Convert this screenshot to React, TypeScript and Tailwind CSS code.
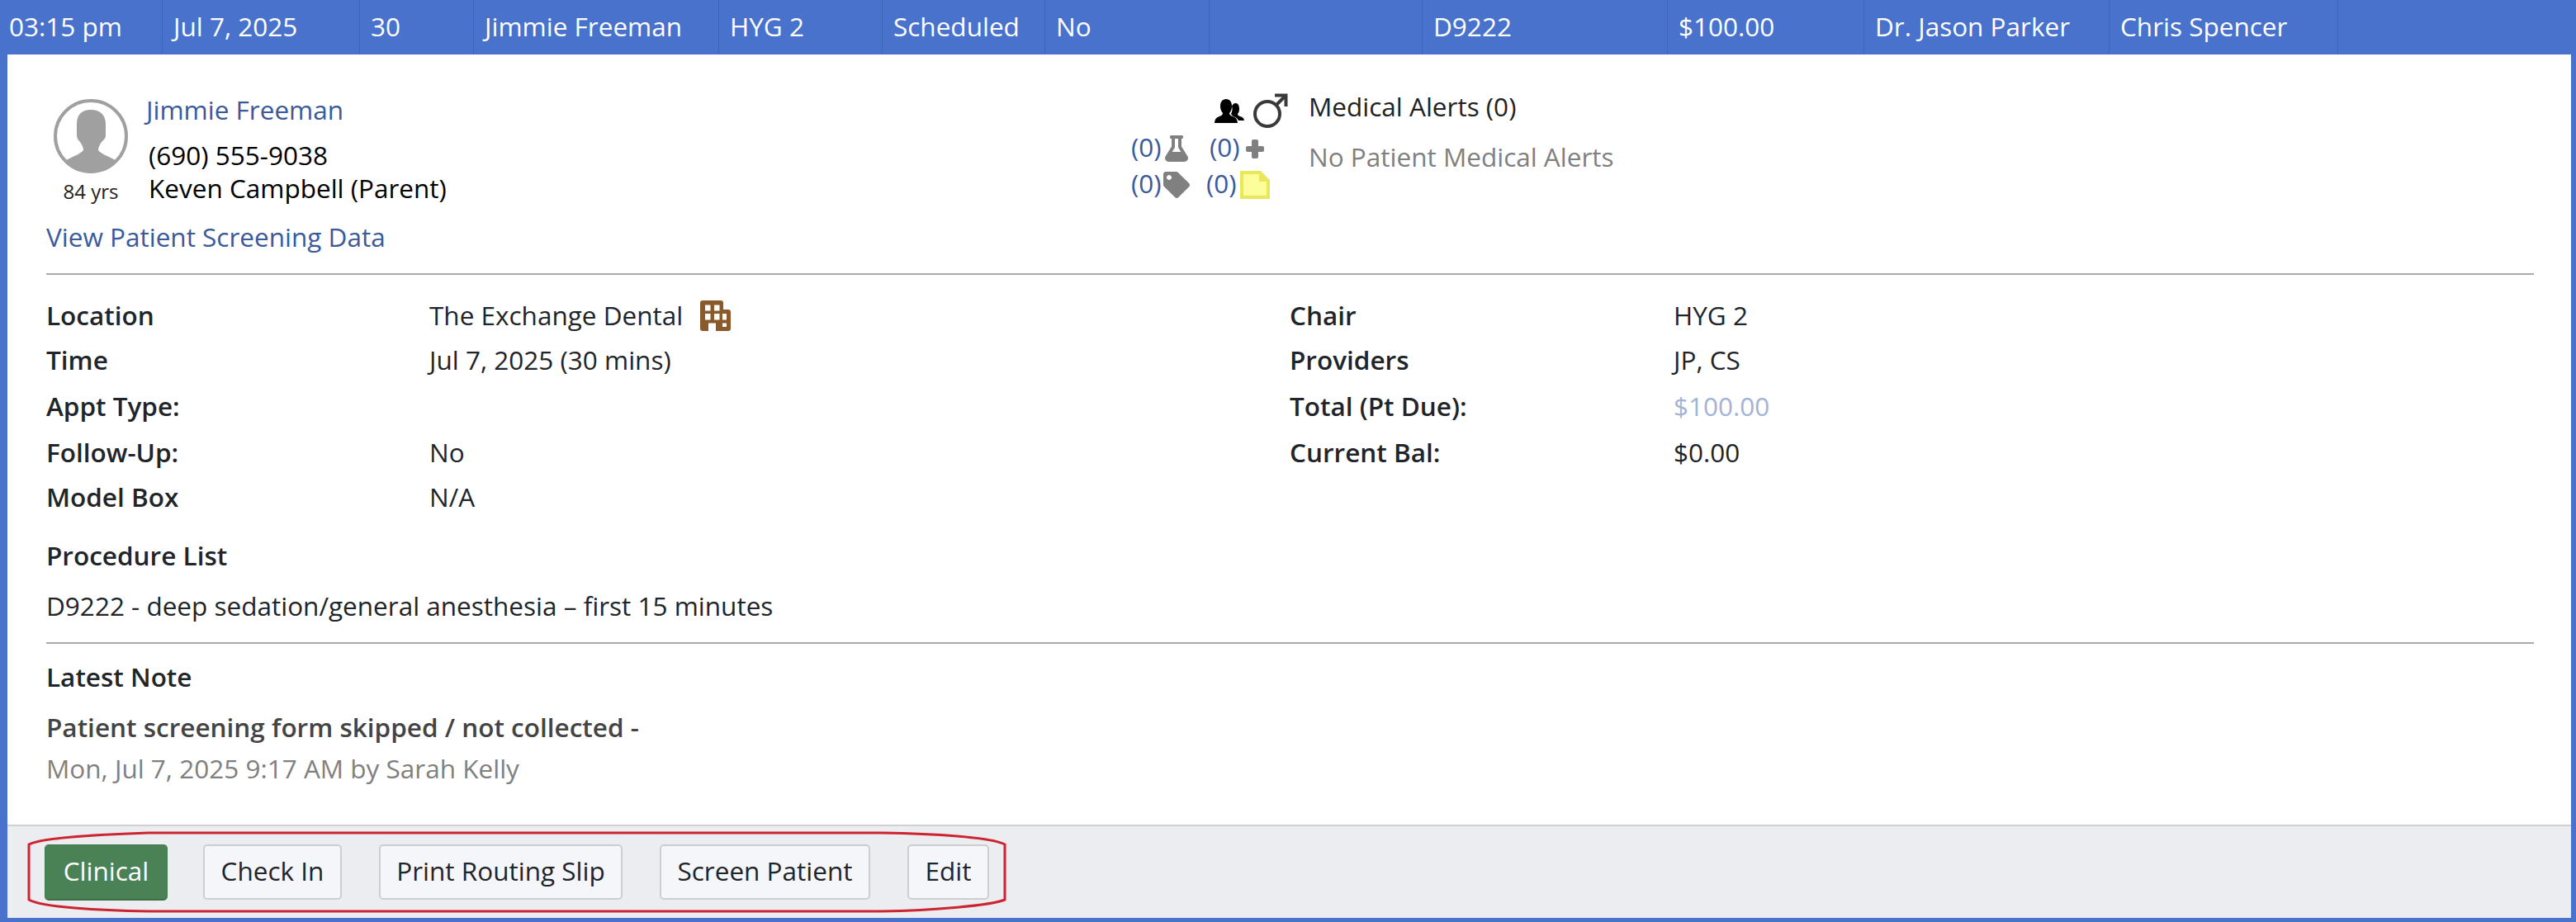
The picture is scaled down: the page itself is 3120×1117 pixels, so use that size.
import { FaFlask, FaTag } from 'react-icons/fa';

// Width of each cell in the appointment row
const headerCells = [
  { label: '03:15 pm', width: 'w-[197px]' },
  { label: 'Jul 7, 2025', width: 'w-[239px]' },
  { label: '30', width: 'w-[138px]' },
  { label: 'Jimmie Freeman', width: 'w-[297px]' },
  { label: 'HYG 2', width: 'w-[198px]' },
  { label: 'Scheduled', width: 'w-[197px]' },
  { label: 'No', width: 'w-[199px]' },
  { label: '', width: 'w-[258px]' },
  { label: 'D9222', width: 'w-[297px]' },
  { label: '$100.00', width: 'w-[238px]' },
  { label: 'Dr. Jason Parker', width: 'w-[297px]' },
  { label: 'Chris Spencer', width: 'w-[277px]' },
];

const detailRows = [
  { h: 'h-[54px]', left: 'Location', value: 'The Exchange Dental', right: 'Chair', rightValue: 'HYG 2', building: true },
  { h: 'h-[53px]', left: 'Time', value: 'Jul 7, 2025 (30 mins)', right: 'Providers', rightValue: 'JP, CS' },
  { h: 'h-[59px]', left: 'Appt Type:', value: '', right: 'Total (Pt Due):', rightValue: '$100.00', muted: true },
  { h: 'h-[54px]', left: 'Follow-Up:', value: 'No', right: 'Current Bal:', rightValue: '$0.00' },
  { h: 'h-[54px]', left: 'Model Box', value: 'N/A', right: '', rightValue: '' },
];

const actions = [
  { label: 'Clinical', cls: 'w-[149px] mr-[43px]', primary: true },
  { label: 'Check In', cls: 'w-[168px] mr-[45px]' },
  { label: 'Print Routing Slip', cls: 'w-[295px] mr-[45px]' },
  { label: 'Screen Patient', cls: 'w-[255px] mr-[45px]' },
  { label: 'Edit', cls: 'w-[99px]' },
];

const Avatar = () => (
  <svg viewBox="0 0 90 90" className="w-[90px] h-[90px]">
    <circle cx="45" cy="45" r="43" fill="#fff" stroke="#a0a0a0" strokeWidth="4" />
    <path
      d="M45 13C33 13 28 20 28 30V44C28 48 30 50 32 52C34 55 36 58 36 62C33 66 25 69 15 74C24 83 34 87 45 87C56 87 66 83 75 74C65 69 57 66 54 62C54 58 56 55 58 52C60 50 63 48 63 44V30C63 20 57 13 45 13Z"
      fill="#a0a0a0"
    />
  </svg>
);

const BuildingIcon = () => (
  <svg viewBox="0 0 37 37" className="w-[37px] h-[37px] ml-[21px]" fill="#8a5a2b">
    <path
      fillRule="evenodd"
      d="M3 0H25a3 3 0 0 1 3 3V11h6a3 3 0 0 1 3 3V34a3 3 0 0 1-3 3H19V27.500H10V37H3a3 3 0 0 1-3-3V3a3 3 0 0 1 3-3zM6 5.500v7h6.500v-7zm11 0v7h6.500v-7zM6 16v7.500h6.500V16zm11 0v7.500h6.500V16zm10 0v7.500h5V16zm0 11.500V32h5v-4.500z"
    />
  </svg>
);

const UsersIcon = () => (
  <svg viewBox="0 0 36 29" className="w-[36px] h-[29px] mb-[7px]" fill="#000">
    <path d="M26 5c-3 0-4.500 2-5 4 1 3 .6 6-1 9 1 2 3 3 5 4 2 1 3 2 4 4h7c-.5-3-2-4-5-5-2-.7-3-1.500-3-3 1.500-1.500 2-3.500 2-6 0-4-1.500-7-4-7z" />
    <path d="M14 0c-4.500 0-7 3.500-7 8.500 0 3.500 1 6.500 3 8.500 0 2-1.500 3-4 4-3.500 1.200-5.500 3-6 8h28c-.5-5-2.500-6.800-6-8-2.500-1-4-2-4-4 2-2 3-5 3-8.500C21 3.500 18.500 0 14 0z" />
  </svg>
);

const MaleIcon = () => (
  <svg viewBox="0 0 43 44" className="w-[43px] h-[44px]" fill="none" stroke="#3a3a3a" strokeWidth="4">
    <circle cx="18" cy="26" r="15" />
    <path d="M28 16L40 4M27 3.500h13.500V17" />
  </svg>
);

const PlusIcon = () => (
  <svg viewBox="0 0 22 23" className="w-[22px] h-[23px] ml-[7px]" fill="#808080">
    <path d="M9 0h4a2 2 0 0 1 2 2v6h5a2 2 0 0 1 2 2v3a2 2 0 0 1-2 2h-5v6a2 2 0 0 1-2 2H9a2 2 0 0 1-2-2v-6H2a2 2 0 0 1-2-2v-3a2 2 0 0 1 2-2h5V2a2 2 0 0 1 2-2z" />
  </svg>
);

const NoteIcon = () => (
  <svg viewBox="0 0 36 34" className="w-[36px] h-[34px] ml-[4px]">
    <path d="M2 2h22l10 10v20H2z" fill="#fdfd9a" stroke="#e8e85a" strokeWidth="4" />
    <path d="M23 2v11h11z" fill="#e8e85a" />
  </svg>
);

const Count = ({ className = '' }: { className?: string }) => (
  <span className={`w-[37px] pb-[4px] shrink-0 text-[#3a5a9b] ${className}`}>(0)</span>
);

const PatientIcons = () => (
  <div className="w-[215px] ml-[-25px] flex flex-col leading-[36px]">
    <div className="h-[52px] flex items-end justify-end pr-[25px] gap-[10px]">
      <UsersIcon />
      <MaleIcon />
    </div>
    <div className="h-[40px] mt-[4px] flex items-center">
      <Count />
      <FaFlask className="w-[28px] h-[32px] ml-[4px] text-[#808080]" />
      <Count className="ml-[26px]" />
      <PlusIcon />
    </div>
    <div className="h-[40px] mt-[4px] flex items-center">
      <Count />
      <FaTag className="w-[32px] h-[32px] ml-[2px] text-[#808080]" />
      <Count className="ml-[20px]" />
      <NoteIcon />
    </div>
  </div>
);

export default function App() {
  return (
    <div className="relative w-[3120px] h-[1117px] bg-[#4872cc] overflow-hidden font-['Open_Sans',sans-serif] text-[31.5px] text-[#212529] flex flex-col">
      {/* Appointment row */}
      <div className="h-[66px] flex shrink-0 text-white">
        {headerCells.map((cell, i) => (
          <div
            key={i}
            className={`${cell.width} ${i === 0 ? 'pl-[11px]' : 'pl-[13px]'} pb-[3px] border-r border-[#3f64b8] flex items-center whitespace-nowrap`}
          >
            {cell.label}
          </div>
        ))}
      </div>

      {/* Panel */}
      <div className="flex-1 ml-[9px] mr-[6px] mb-[5px] bg-white flex flex-col">
        <div className="flex-1 pl-[47px] pr-[45px]">
          <div className="h-[267px] border-b-2 border-[#aaaaaa] flex">
            <div className="w-[1339px] flex flex-col">
              <div className="flex pl-[9px] pt-[54px] h-[190px]">
                <div className="w-[90px] flex flex-col items-center">
                  <Avatar />
                  <div className="text-[24px] leading-[30px] mt-[7px] text-[#222] whitespace-nowrap">84 yrs</div>
                </div>
                <div className="pl-[22px] whitespace-nowrap">
                  <div className="text-[#3a5a9b] leading-[40px] mt-[-7px]">Jimmie Freeman</div>
                  <div className="text-black leading-[40px] mt-[15px] pl-[3px]">(690) 555-9038</div>
                  <div className="text-black leading-[40px] pl-[3px]">Keven Campbell (Parent)</div>
                </div>
              </div>
              <div className="text-[#3a5a9b] leading-[40px] mt-[11px]">View Patient Screening Data</div>
            </div>
            <div className="flex pt-[38px]">
              <PatientIcons />
              <div>
                <div className="leading-[40px] mt-[5px] text-[#222]">Medical Alerts (0)</div>
                <div className="leading-[40px] mt-[21px] text-[#808080]">No Patient Medical Alerts</div>
              </div>
            </div>
          </div>

          <div className="mt-[22px] grid grid-cols-[464px_1042px_465px_1fr]">
            {detailRows.map((row) => (
              <div key={row.left} className={`${row.h} col-span-4 grid grid-cols-subgrid items-center`}>
                <div className="font-semibold">{row.left}</div>
                <div className="flex items-center">
                  {row.value}
                  {row.building && <BuildingIcon />}
                </div>
                <div className="font-semibold">{row.right}</div>
                <div className={row.muted ? 'text-[#a3b3d6]' : ''}>{row.rightValue}</div>
              </div>
            ))}
          </div>

          <div className="mt-[24px] leading-[40px] font-semibold">Procedure List</div>
          <div className="mt-[21px] leading-[40px]">D9222 - deep sedation/general anesthesia – first 15 minutes</div>
          <div className="mt-[24px] border-t-2 border-[#aaaaaa]" />
          <div className="mt-[20px] leading-[40px] font-semibold">Latest Note</div>
          <div className="mt-[21px] leading-[40px] font-semibold text-[#444]">Patient screening form skipped / not collected -</div>
          <div className="mt-[10px] leading-[40px] text-[#808080]">Mon, Jul 7, 2025 9:17 AM by Sarah Kelly</div>
        </div>

        {/* Action bar */}
        <div className="h-[113px] shrink-0 bg-[#ecedf1] border-t-2 border-[#cfd0d4] pl-[45px] pt-[22px] flex">
          {actions.map((action) => (
            <button
              key={action.label}
              className={
                action.primary
                  ? `${action.cls} h-[68px] pb-[3px] rounded-[5px] bg-[#4a8256] text-white border border-[#447a50] border-b-2 border-b-[#3d6e48]`
                  : `${action.cls} h-[67px] pb-[3px] rounded-[5px] bg-[#f5f6f9] text-[#212529] border-2 border-[#cdced2]`
              }
            >
              {action.label}
            </button>
          ))}
        </div>
      </div>

      {/* Red annotation round the buttons */}
      <svg className="absolute left-[30px] top-[1003px] w-[1195px] h-[108px]" viewBox="0 0 1195 108" fill="none">
        <path
          d="M150 6H1038C1100 7 1170 11 1187 20V87C1170 94 1100 100 1038 101H150C90 100 20 96 5 87V20C20 12 90 8 150 6Z"
          stroke="#cc2431"
          strokeWidth="3"
        />
      </svg>
    </div>
  );
}
